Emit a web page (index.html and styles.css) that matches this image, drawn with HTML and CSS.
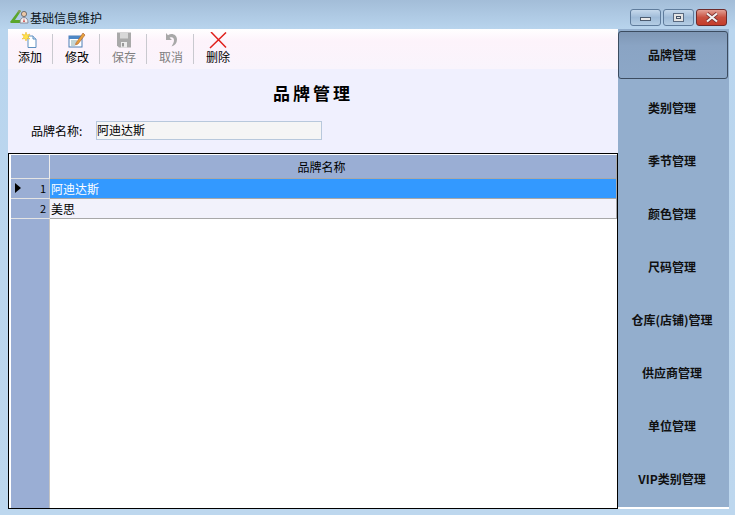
FILE: index.html
```html
<!DOCTYPE html>
<html lang="zh-CN">
<head>
    <meta charset="UTF-8">
    <title>基础信息维护</title>
    <link rel="stylesheet" href="styles.css">
</head>
<body>
    <div class="window">
        <div class="titlebar">
            <svg class="app-icon" width="20" height="16" viewBox="0 0 20 16">
                <path d="M0 13 L9 1 L11 2 L5 11 L11 11 L11 14 L1 14 Z" fill="#5aa62a"/>
                <path d="M9 1 L11 2 L9.5 4 L7.5 3 Z" fill="#8a9a5a"/>
                <circle cx="14" cy="5" r="2.6" fill="#ecc8a8" stroke="#5a5a5a" stroke-width="0.8"/>
                <path d="M10 14 Q10 8.5 14 8.5 Q18 8.5 18 14 Z" fill="#f0f0f0" stroke="#7a7a8a" stroke-width="0.8"/>
                <path d="M14 9 L13.2 13 L14.8 13 Z" fill="#c33"/>
            </svg>
            <span class="window-title">基础信息维护</span>
            <div class="window-buttons">
                <div class="win-btn"><span class="glyph-min"></span></div>
                <div class="win-btn"><span class="glyph-max"></span></div>
                <div class="win-btn close">
                    <svg width="16" height="11" viewBox="0 0 16 11">
                        <path d="M3 1.5 L13 9.5 M13 1.5 L3 9.5" stroke="#7a3030" stroke-width="3.6"/>
                        <path d="M3 1.5 L13 9.5 M13 1.5 L3 9.5" stroke="#f2f2f2" stroke-width="2.2"/>
                    </svg>
                </div>
            </div>
        </div>
        <div class="client">
            <div class="main">
                <div class="toolbar">
                    <div class="tool">
                        <svg width="18" height="18" viewBox="0 0 18 18">
                            <path d="M7 4 H12 L15 7 V15.5 H7 Z" fill="#fff" stroke="#5c8fc0"/>
                            <path d="M12 4 V7 H15" fill="#cfe2f5" stroke="#5c8fc0"/>
                            <path d="M5 0 L6 3 L9 2 L7 5 L9 7 L6 6.5 L5 9 L4 6.5 L1 7 L3 5 L1 2 L4 3 Z" fill="#ffe24a" stroke="#e3a400" stroke-width="0.4"/>
                        </svg>
                        <span>添加</span>
                    </div>
                    <div class="tool-sep"></div>
                    <div class="tool">
                        <svg width="18" height="18" viewBox="0 0 18 18">
                            <rect x="1" y="4" width="13" height="11" fill="#fff" stroke="#4d7fb5"/>
                            <rect x="1" y="4" width="13" height="3" fill="#4d86c6"/>
                            <path d="M3 9 H9 M3 11 H8 M3 13 H7" stroke="#8aa" stroke-width="1"/>
                            <path d="M8 11 L15 1 L17 3 L10 12 L7.5 13 Z" fill="#e6a23c" stroke="#a8552a" stroke-width="0.6"/>
                        </svg>
                        <span>修改</span>
                    </div>
                    <div class="tool-sep"></div>
                    <div class="tool off">
                        <svg width="18" height="18" viewBox="0 0 18 18">
                            <path d="M2 0.5 H16 V15.5 H4 L2 13.5 Z" fill="#a9a9a9"/>
                            <rect x="5" y="0.5" width="8" height="6" fill="#d8d8d8"/>
                            <rect x="6" y="10" width="6" height="5.5" fill="#ececec"/>
                            <rect x="7" y="11" width="2" height="3.5" fill="#999"/>
                        </svg>
                        <span>保存</span>
                    </div>
                    <div class="tool-sep"></div>
                    <div class="tool off">
                        <svg width="18" height="18" viewBox="0 0 18 18">
                            <path d="M4 1 V8 H10 L7.6 5.8 C9.8 4.6 12 5.6 12 8.2 C12 10.5 11 12 9.5 14.5 C13 13.5 15 11 15 7.5 C15 3 10 0.5 6 3.2 Z" fill="#a8a8a8"/>
                        </svg>
                        <span>取消</span>
                    </div>
                    <div class="tool-sep"></div>
                    <div class="tool">
                        <svg width="18" height="18" viewBox="0 0 18 18">
                            <path d="M2 0 L17 15.5 M17 0.5 L1 16" stroke="#e0201c" stroke-width="1.5" fill="none"/>
                        </svg>
                        <span>删除</span>
                    </div>
                </div>
                <div class="form">
                    <h1 class="page-title">品牌管理</h1>
                    <div class="field">
                        <label class="field-label">品牌名称:</label>
                        <div class="field-input">阿迪达斯</div>
                    </div>
                </div>
                <div class="grid">
                    <div class="grid-head">
                        <div class="row-head"></div>
                        <div class="col-head">品牌名称</div>
                    </div>
                    <div class="grid-row selected">
                        <div class="row-head"><span class="arrow"></span><span class="row-num">1</span></div>
                        <div class="cell">阿迪达斯</div>
                    </div>
                    <div class="grid-row alt">
                        <div class="row-head"><span class="row-num">2</span></div>
                        <div class="cell">美思</div>
                    </div>
                    <div class="grid-empty">
                        <div class="row-head"></div>
                    </div>
                </div>
            </div>
            <div class="sidebar">
                <div class="side-btn active">品牌管理</div>
                <div class="side-btn">类别管理</div>
                <div class="side-btn">季节管理</div>
                <div class="side-btn">颜色管理</div>
                <div class="side-btn">尺码管理</div>
                <div class="side-btn">仓库(店铺)管理</div>
                <div class="side-btn">供应商管理</div>
                <div class="side-btn">单位管理</div>
                <div class="side-btn">VIP类别管理</div>
            </div>
        </div>
    </div>
</body>
</html>
```

FILE: styles.css
```css
html, body {
    margin: 0;
    padding: 0;
}
body {
    width: 735px;
    height: 515px;
    overflow: hidden;
    font-family: "Noto Sans CJK SC", "Liberation Sans", sans-serif;
    font-size: 12px;
    color: #000;
}
.window {
    box-sizing: border-box;
    width: 735px;
    height: 515px;
    display: flex;
    flex-direction: column;
    padding: 0 6px 6px 8px;
    background: linear-gradient(to bottom, #a3bdd8 0, #b9d5ee 30px, #bdd7ee 100%);
}
.titlebar {
    box-sizing: border-box;
    height: 29px;
    flex: none;
    display: flex;
    align-items: center;
    padding-top: 5px;
    margin-left: 2px;
}
.window-title {
    margin-left: 0;
    color: #0a1420;
}
.window-buttons {
    margin-left: auto;
    display: flex;
    gap: 2px;
    margin-right: 2px;
    align-self: flex-start;
    margin-top: 4px;
}
.win-btn {
    box-sizing: border-box;
    width: 31px;
    height: 17px;
    border: 1px solid #5f7c9c;
    border-radius: 3px;
    background: linear-gradient(to bottom, #c6d9ec, #9fbbd8 50%, #b4cde4);
    display: flex;
    align-items: center;
    justify-content: center;
}
.win-btn.close {
    border-color: #6e2a2a;
    background: linear-gradient(to bottom, #e3a095, #c8503f 50%, #c43c2a);
}
.glyph-min {
    width: 11px;
    height: 4px;
    box-sizing: border-box;
    background: #e8e8e8;
    border: 1px solid #4c5c70;
    margin-top: 3px;
}
.glyph-max {
    width: 11px;
    height: 9px;
    box-sizing: border-box;
    background: #e4e4e4;
    border: 1px solid #5a6a80;
    display: flex;
    align-items: center;
    justify-content: center;
}
.glyph-max::after {
    content: "";
    width: 5px;
    height: 3px;
    box-sizing: border-box;
    border: 1px solid #445266;
}
.client {
    flex: 1;
    display: flex;
    min-height: 0;
}
.main {
    width: 610px;
    flex: none;
    display: flex;
    flex-direction: column;
    background: #f0f0fe;
}
.toolbar {
    height: 40px;
    flex: none;
    display: flex;
    align-items: center;
    padding-left: 3px;
    box-sizing: border-box;
    background: linear-gradient(to bottom, #ffffff 0, #fdf3fb 30%, #f9f4fc 100%);
}
.tool {
    width: 38px;
    display: flex;
    flex-direction: column;
    align-items: center;
    align-self: flex-start;
    line-height: 14px;
    padding-top: 3px;
}
.tool svg {
    display: block;
    height: 18px;
}
.tool.off {
    color: #808080;
}
.tool-sep {
    width: 1px;
    height: 30px;
    margin: 0 5px 0 3px;
    background: #c9c9cf;
}
.form {
    height: 84px;
    flex: none;
    box-sizing: border-box;
}
.page-title {
    margin: 0;
    padding-top: 12px;
    height: 39px;
    box-sizing: border-box;
    text-align: center;
    font-size: 17px;
    line-height: 24px;
    letter-spacing: 3px;
    font-weight: bold;
}
.field {
    display: flex;
    align-items: center;
    padding-left: 23px;
    margin-top: 13px;
}
.field-label {
    width: 65px;
}
.field-input {
    box-sizing: border-box;
    width: 226px;
    height: 19px;
    line-height: 16px;
    background: #f5f5f5;
    border: 1px solid #b8c8dc;
}
.grid {
    flex: 1;
    min-height: 0;
    display: flex;
    flex-direction: column;
    box-sizing: border-box;
    padding: 1px 0 0 2px;
    background: #fff;
    border: 1px solid #000;
}
.grid-head, .grid-row {
    display: flex;
    flex: none;
    border-bottom: 1px solid #a8a8a8;
    border-right: 1px solid #a8a8a8;
}
.grid-head {
    height: 24px;
    box-sizing: border-box;
    background: #9aaed4;
}
.grid-row {
    height: 20px;
    box-sizing: border-box;
    line-height: 19px;
}
.grid-empty {
    flex: 1;
    display: flex;
}
.row-head {
    box-sizing: border-box;
    width: 39px;
    flex: none;
    background: #9aaed4;
    border-right: 1px solid #c4c4c4;
    box-shadow: 0 1px 0 #e4e4e4;
    display: flex;
    align-items: center;
    justify-content: flex-end;
    position: relative;
}
.grid-head .row-head {
    border-right-color: #ececec;
}
.grid-empty .row-head {
    box-shadow: none;
}
.row-num {
    padding-right: 3px;
    font-size: 11px;
}
.arrow {
    position: absolute;
    left: 4px;
    top: 4px;
    width: 0;
    height: 0;
    border-left: 6px solid #000;
    border-top: 5px solid transparent;
    border-bottom: 5px solid transparent;
}
.col-head {
    flex: 1;
    text-align: center;
    line-height: 24px;
    padding-right: 23px;
}
.cell {
    flex: 1;
    padding-left: 1px;
    white-space: nowrap;
}
.selected .cell {
    background: #3399ff;
    color: #fff;
}
.alt .cell {
    background: #f2f2fb;
}
.sidebar {
    width: 111px;
    flex: none;
    display: flex;
    flex-direction: column;
    gap: 5px;
    padding-top: 2px;
    box-sizing: border-box;
    background: #93aecd;
    border-bottom: 2px solid #fff;
}
.side-btn {
    height: 48px;
    flex: none;
    box-sizing: border-box;
    padding: 0 3px 2px 0;
    display: flex;
    align-items: center;
    justify-content: center;
    font-weight: bold;
    color: #101010;
}
.side-btn.active {
    margin-right: 1px;
    padding-right: 2px;
    border: 1px solid #3c4c60;
    border-radius: 3px;
    background: linear-gradient(to bottom, #7f97b5, #8aa4c4 30%, #8ca7c7);
}
```
